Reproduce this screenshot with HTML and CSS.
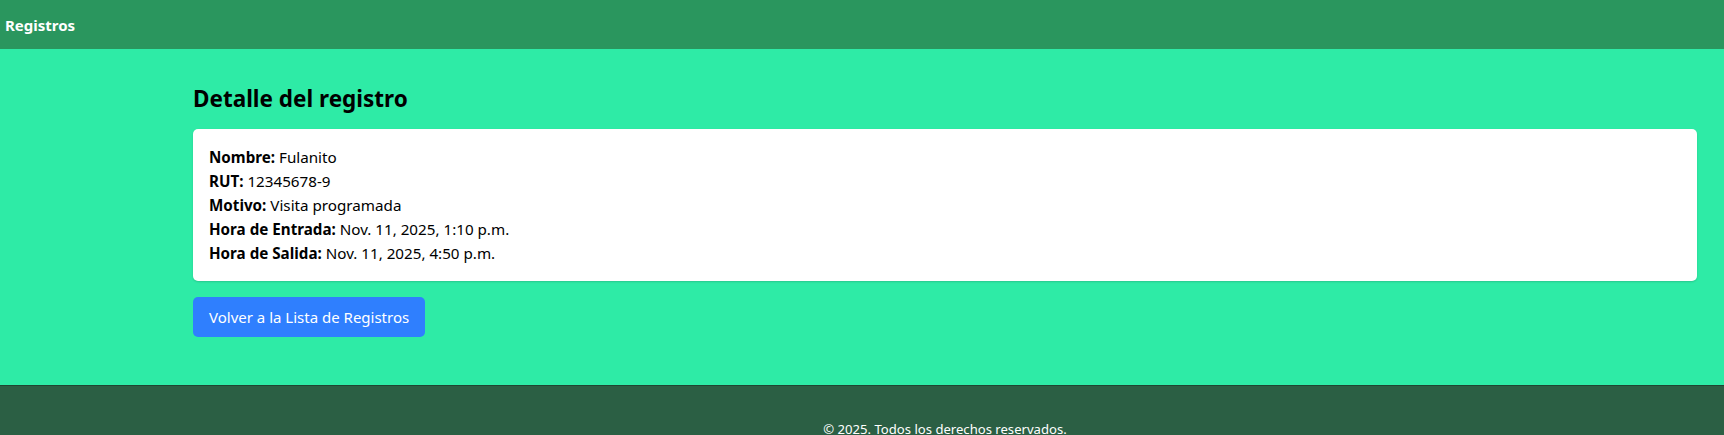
FILE: index.html
```html
<!DOCTYPE html>
<html lang="es">
<head>
<meta charset="utf-8">
<title>Detalle del registro</title>
<link rel="stylesheet" href="styles.css">
</head>
<body>
<nav class="navbar">
  <a class="brand" href="#">Registros</a>
</nav>
<main class="main">
  <div class="container">
    <h2 class="title">Detalle del registro</h2>
    <div class="card">
      <p><strong>Nombre:</strong> Fulanito</p>
      <p><strong>RUT:</strong> 12345678-9</p>
      <p><strong>Motivo:</strong> Visita programada</p>
      <p><strong>Hora de Entrada:</strong> Nov. 11, 2025, 1:10 p.m.</p>
      <p><strong>Hora de Salida:</strong> Nov. 11, 2025, 4:50 p.m.</p>
    </div>
    <a class="btn" href="#">Volver a la Lista de Registros</a>
  </div>
</main>
<footer class="footer">
  <div class="container">
    <p class="copy">© 2025. Todos los derechos reservados.</p>
  </div>
</footer>
</body>
</html>
```
FILE: styles.css
```css
* { box-sizing: border-box; }
html, body { margin: 0; padding: 0; }
body {
  font-family: "Noto Sans", "Open Sans", sans-serif;
  font-size: 15.2px;
  line-height: 24px;
  color: #000;
  background: #2eeba6;
}
.navbar {
  height: 49px;
  background: #2a965e;
  display: flex;
  align-items: center;
  padding: 0 5px;
}
.brand {
  color: #fff;
  font-weight: 700;
  font-size: 15px;
  text-decoration: none;
}
.main {
  background: #2eeba6;
  height: 336px;
}
.container {
  padding-left: 193px;
  padding-right: 27px;
}
.main .container {
  padding-top: 32px;
  display: flex;
  flex-direction: column;
  align-items: flex-start;
}
.title {
  margin: 0 0 12px;
  font-size: 22.5px;
  line-height: 36px;
  font-weight: 700;
}
.card {
  align-self: stretch;
  background: #fff;
  border-radius: 5px;
  padding: 16px;
  box-shadow: 0 1px 2px rgba(0,0,0,0.15);
  margin-bottom: 16px;
}
.card p { margin: 0; }
.btn {
  display: inline-block;
  background: #2f7ffe;
  color: #fff;
  text-decoration: none;
  padding: 8px 16px;
  border-radius: 5px;
  font-size: 15px;
  line-height: 24px;
}
.footer {
  background: #2b5f44;
  border-top: 1px solid #1e4632;
  height: 50px;
  overflow: hidden;
}
.copy {
  margin: 0;
  padding-top: 33px;
  font-size: 13.1px;
  line-height: 20px;
  text-align: center;
  color: #fff;
}
```
